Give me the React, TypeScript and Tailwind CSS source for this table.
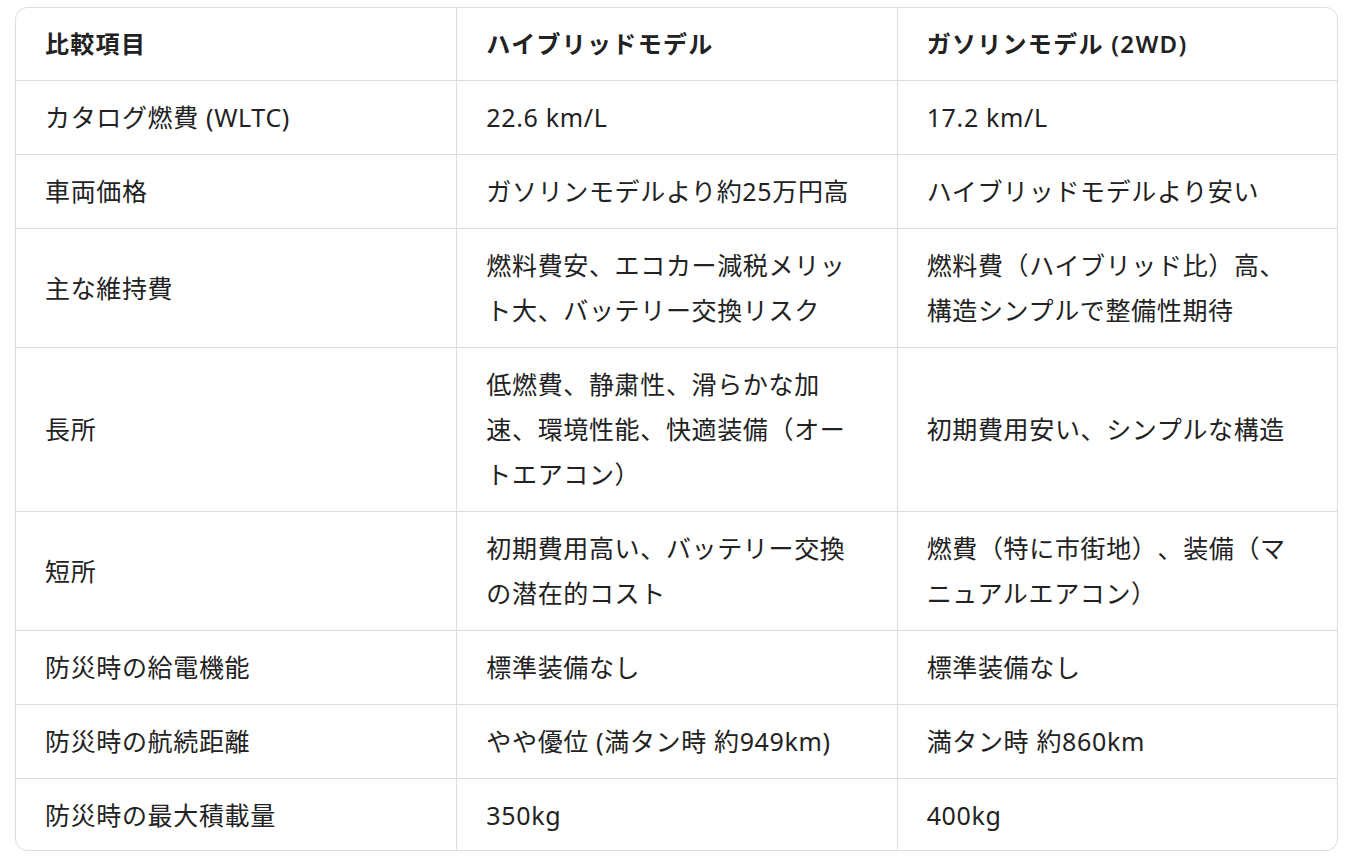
const headers = ["比較項目", "ハイブリッドモデル", "ガソリンモデル (2WD)"];

const rows: string[][] = [
  ["カタログ燃費 (WLTC)", "22.6 km/L", "17.2 km/L"],
  ["車両価格", "ガソリンモデルより約25万円高", "ハイブリッドモデルより安い"],
  ["主な維持費", "燃料費安、エコカー減税メリット大、バッテリー交換リスク", "燃料費（ハイブリッド比）高、構造シンプルで整備性期待"],
  ["長所", "低燃費、静粛性、滑らかな加速、環境性能、快適装備（オートエアコン）", "初期費用安い、シンプルな構造"],
  ["短所", "初期費用高い、バッテリー交換の潜在的コスト", "燃費（特に市街地）、装備（マニュアルエアコン）"],
  ["防災時の給電機能", "標準装備なし", "標準装備なし"],
  ["防災時の航続距離", "やや優位 (満タン時 約949km)", "満タン時 約860km"],
  ["防災時の最大積載量", "350kg", "400kg"],
];

export default function App() {
  return (
    <div
      className="bg-white w-[1352px] min-h-[858px] pt-[7px] pl-[15px] text-[#222222] [text-spacing-trim:space-all]"
      style={{ fontFamily: '"Noto Sans", "Noto Sans CJK JP", sans-serif' }}
    >
      <div className="w-[1323px] border border-[#dddddd] rounded-[12px] overflow-hidden">
        <div className="grid grid-cols-3">
          {headers.map((h, i) => (
            <div
              key={h}
              className={`px-[29px] py-[14px] text-[24px] leading-[44px] font-semibold tracking-[1.3px] ${
                i > 0 ? "border-l border-[#dddddd]" : ""
              }`}
            >
              {h}
            </div>
          ))}
        </div>
        {rows.map((r, ri) => (
          <div key={r[0]} className="grid grid-cols-3 border-t border-[#dddddd]">
            {r.map((c, i) => (
              <div
                key={i}
                className={`flex items-center px-[29px] pt-[14px] text-[25px] leading-[45px] tracking-[0.65px] ${
                  ri === rows.length - 1 ? "pb-[12px]" : "pb-[14px]"
                } ${i > 0 ? "border-l border-[#dddddd]" : ""}`}
              >
                <span>{c}</span>
              </div>
            ))}
          </div>
        ))}
      </div>
    </div>
  );
}
